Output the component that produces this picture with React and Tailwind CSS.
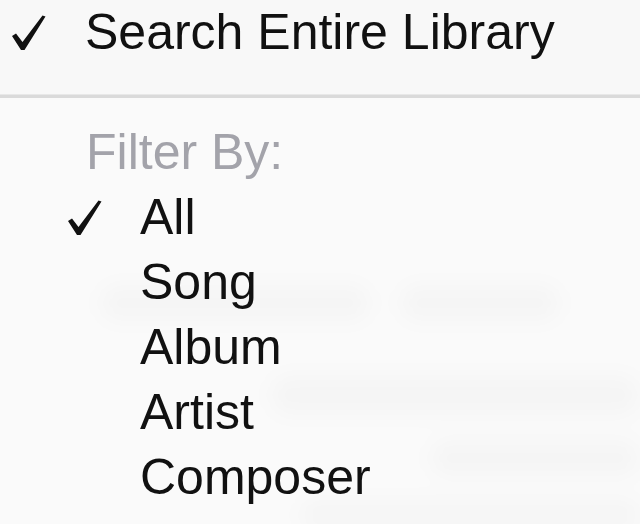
import React from 'react'

function Check({ className }) {
  return (
    <svg viewBox="0 0 34 36" className={className} fill="#111">
      <path d="M0 21 L4 18.5 L10.5 27 L30.5 0.5 L33.5 1.5 L12.5 35 L9 35 Z" />
    </svg>
  )
}

const filters = ['All', 'Song', 'Album', 'Artist', 'Composer']

export default function App() {
  return (
    <div
      className="relative w-[640px] h-[524px] overflow-hidden bg-[#fafafa] text-[#111]"
      style={{ fontFamily: '"Liberation Sans", Arial, sans-serif' }}
    >
      {/* faint list seen through the translucent menu */}
      <div className="absolute inset-0 pointer-events-none blur-[10px]">
        <div className="absolute left-[100px] top-[285px] w-[270px] h-[36px] rounded-full bg-black/[0.02]" />
        <div className="absolute left-[400px] top-[285px] w-[160px] h-[36px] rounded-full bg-black/[0.02]" />
        <div className="absolute left-[270px] top-[375px] w-[370px] h-[40px] rounded-full bg-black/[0.018]" />
        <div className="absolute left-[430px] top-[440px] w-[210px] h-[36px] rounded-full bg-black/[0.018]" />
        <div className="absolute left-[300px] top-[500px] w-[340px] h-[30px] rounded-full bg-black/[0.018]" />
      </div>

      <div className="relative flex flex-col">
        <div className="flex items-center h-[65px] bg-[#f8f8f8]">
          <Check className="ml-[12px] w-[34px] h-[36px] mt-[1px]" />
          <span className="ml-[39px] text-[50px] leading-[65px]">Search Entire Library</span>
        </div>
        <div className="h-[29px] bg-[#f8f8f8]" />
        <div className="h-[1px] bg-[#e8e8e8]" />
        <div className="h-[3px] bg-[#dadada]" />
        <div className="h-[22px]" />

        <div className="h-[65px] pl-[86px] text-[50px] leading-[65px] text-[#a3a3aa]">Filter By:</div>
        {filters.map((f, i) => (
          <div key={f} className="flex items-center h-[65px]">
            <div className="w-[140px] flex">
              {i === 0 && <Check className="ml-[68px] w-[34px] h-[36px] mt-[1px]" />}
            </div>
            <span className="text-[50px] leading-[65px]">{f}</span>
          </div>
        ))}
      </div>
    </div>
  )
}
